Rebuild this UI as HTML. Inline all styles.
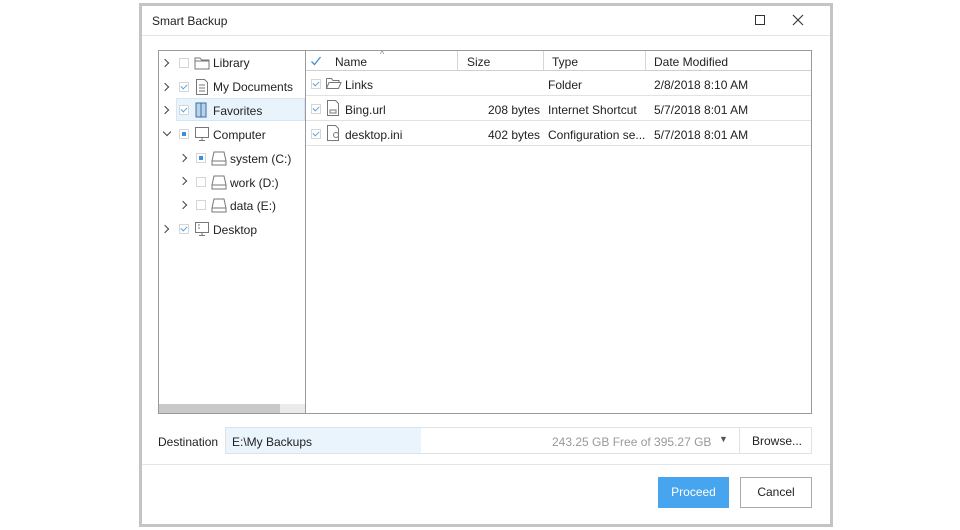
<!DOCTYPE html>
<html><head><style>
*{box-sizing:border-box;margin:0;padding:0}
body{width:960px;height:530px;background:#fff;font-family:"Liberation Sans",sans-serif;font-size:12px;color:#222;position:relative;overflow:hidden}
.a{position:absolute}
.dlg{left:139px;top:3px;width:694px;height:524px;border:3px solid #c4c4c4;background:#fff}
.t{white-space:nowrap}
.cb{position:absolute;width:10px;height:10px;border:1px solid #d6d6d6;background:#fff}
.cb.c::after{content:"";position:absolute;left:2px;top:0px;width:3px;height:5px;border:solid #5a9fd6;border-width:0 1px 1px 0;transform:rotate(45deg)}
.cb.s::after{content:"";position:absolute;left:2px;top:2px;width:4px;height:4px;background:#3d8fd8}
.chev{position:absolute;width:6px;height:6px;border:solid #444;border-width:1px 1px 0 0;transform:rotate(45deg)}
.chev.d{transform:rotate(135deg)}
.row{position:absolute;left:306px;width:505px;height:25px;border-bottom:1px solid #e2e2e2}
</style></head><body>
<div class="a dlg"></div>
<div class="a t" style="left:152px;top:14px;font-size:12px">Smart Backup</div>
<div class="a" style="left:755px;top:15px;width:10px;height:10px;border:1px solid #333"></div>
<svg class="a" style="left:792px;top:14px" width="12" height="12"><path d="M1 1L11 11M11 1L1 11" stroke="#333" stroke-width="1.1"/></svg>
<div class="a" style="left:142px;top:35px;width:688px;height:1px;background:#e4e4e4"></div>

<!-- panels -->
<div class="a" style="left:158px;top:50px;width:654px;height:364px;border:1px solid #9a9a9a"></div>
<div class="a" style="left:305px;top:50px;width:1px;height:364px;background:#9a9a9a"></div>
<div class="a" style="left:159px;top:404px;width:146px;height:9px;background:#ebebeb"></div>
<div class="a" style="left:159px;top:404px;width:121px;height:9px;background:#c9c9c9"></div>

<!-- tree -->
<div class="a" style="left:176px;top:98px;width:129px;height:23px;background:#e9f3fc;border:1px solid #d4e6f7"></div>
<div class="chev" style="left:162px;top:60px"></div><div class="cb" style="left:179px;top:58px"></div>
<svg class="a" style="left:194px;top:56px" width="16" height="14"><path d="M1 2h5l1.5 2H15v9H1z M1 5h14" fill="none" stroke="#777"/></svg>
<div class="a t" style="left:213px;top:56px">Library</div>
<div class="chev" style="left:162px;top:84px"></div><div class="cb c" style="left:179px;top:82px"></div>
<svg class="a" style="left:195px;top:79px" width="14" height="16"><path d="M1.5 .5h8l3 3v12h-11z M4 6h6M4 9h6M4 12h6" fill="none" stroke="#777"/></svg>
<div class="a t" style="left:213px;top:80px">My Documents</div>
<div class="chev" style="left:162px;top:107px"></div><div class="cb c" style="left:179px;top:105px"></div>
<svg class="a" style="left:195px;top:102px" width="14" height="16"><rect x="1" y="1" width="10" height="14" fill="#b9d2ea" stroke="#3a6ea5"/><path d="M6 1v14" stroke="#3a6ea5"/></svg>
<div class="a t" style="left:213px;top:104px">Favorites</div>
<div class="chev d" style="left:164px;top:129px"></div><div class="cb s" style="left:179px;top:129px"></div>
<svg class="a" style="left:194px;top:126px" width="16" height="16"><path d="M1.5 1.5h13v10h-13z M8 11.5v3M5 14.5h6" fill="none" stroke="#777"/></svg>
<div class="a t" style="left:213px;top:128px">Computer</div>
<div class="chev" style="left:180px;top:155px"></div><div class="cb s" style="left:196px;top:153px"></div>
<svg class="a" style="left:211px;top:150px" width="16" height="16"><path d="M3 2h10l2 9v4H1v-4z M1 11h14" fill="none" stroke="#777"/></svg>
<div class="a t" style="left:230px;top:152px">system (C:)</div>
<div class="chev" style="left:180px;top:178px"></div><div class="cb" style="left:196px;top:177px"></div>
<svg class="a" style="left:211px;top:174px" width="16" height="16"><path d="M3 2h10l2 9v4H1v-4z M1 11h14" fill="none" stroke="#777"/></svg>
<div class="a t" style="left:230px;top:176px">work (D:)</div>
<div class="chev" style="left:180px;top:202px"></div><div class="cb" style="left:196px;top:200px"></div>
<svg class="a" style="left:211px;top:197px" width="16" height="16"><path d="M3 2h10l2 9v4H1v-4z M1 11h14" fill="none" stroke="#777"/></svg>
<div class="a t" style="left:230px;top:199px">data (E:)</div>
<div class="chev" style="left:162px;top:226px"></div><div class="cb c" style="left:179px;top:224px"></div>
<svg class="a" style="left:194px;top:221px" width="16" height="16"><path d="M1.5 1.5h13v10h-13z M8 11.5v3M5 14.5h6 M4 4h2M4 7h2" fill="none" stroke="#777"/></svg>
<div class="a t" style="left:213px;top:223px">Desktop</div>

<!-- list header -->
<div class="a" style="left:306px;top:51px;width:505px;height:20px;border-bottom:1px solid #cfcfcf"></div>
<div class="a" style="left:457px;top:51px;width:1px;height:20px;background:#d6d6d6"></div>
<div class="a" style="left:543px;top:51px;width:1px;height:20px;background:#d6d6d6"></div>
<div class="a" style="left:645px;top:51px;width:1px;height:20px;background:#d6d6d6"></div>
<svg class="a" style="left:310px;top:55px" width="12" height="12"><path d="M1.5 6.5L4.5 9.5L10.5 2" fill="none" stroke="#3d8fd8" stroke-width="1.3"/></svg>
<div class="a t" style="left:335px;top:55px">Name</div>
<div class="a t" style="left:380px;top:49px;font-size:9px;color:#888">^</div>
<div class="a t" style="left:467px;top:55px">Size</div>
<div class="a t" style="left:552px;top:55px">Type</div>
<div class="a t" style="left:654px;top:55px">Date Modified</div>

<div class="row" style="top:71px"></div>
<div class="cb c" style="left:311px;top:79px"></div>
<svg class="a" style="left:326px;top:77px" width="16" height="13"><path d="M.5 1.5h5l1.5 2h6v2 M.5 1.5v10h12l2.5-6H3l-2.5 6" fill="none" stroke="#777"/></svg>
<div class="a t" style="left:345px;top:78px">Links</div>
<div class="a t" style="left:548px;top:78px">Folder</div>
<div class="a t" style="left:654px;top:78px">2/8/2018 8:10 AM</div>

<div class="row" style="top:96px"></div>
<div class="cb c" style="left:311px;top:104px"></div>
<svg class="a" style="left:327px;top:100px" width="13" height="16"><path d="M.5 .5h8l3 3v12H.5z M3 10h6v3H3z" fill="none" stroke="#777"/></svg>
<div class="a t" style="left:345px;top:103px">Bing.url</div>
<div class="a t" style="left:488px;top:103px">208 bytes</div>
<div class="a t" style="left:548px;top:103px">Internet Shortcut</div>
<div class="a t" style="left:654px;top:103px">5/7/2018 8:01 AM</div>

<div class="row" style="top:121px"></div>
<div class="cb c" style="left:311px;top:129px"></div>
<svg class="a" style="left:327px;top:125px" width="14" height="16"><path d="M.5 .5h8l3 3v12H.5z" fill="none" stroke="#777"/><circle cx="9" cy="10" r="2.5" fill="none" stroke="#777"/></svg>
<div class="a t" style="left:345px;top:128px">desktop.ini</div>
<div class="a t" style="left:488px;top:128px">402 bytes</div>
<div class="a t" style="left:548px;top:128px">Configuration se...</div>
<div class="a t" style="left:654px;top:128px">5/7/2018 8:01 AM</div>

<!-- destination -->
<div class="a t" style="left:158px;top:435px">Destination</div>
<div class="a" style="left:225px;top:427px;width:587px;height:27px;border:1px solid #e2e2e2"></div>
<div class="a" style="left:226px;top:428px;width:195px;height:25px;background:#eaf4fc"></div>
<div class="a t" style="left:232px;top:435px">E:\My Backups</div>
<div class="a t" style="left:552px;top:435px;color:#999">243.25 GB Free of 395.27 GB</div>
<div class="a t" style="left:719px;top:434px;font-size:9px;color:#555">▼</div>
<div class="a" style="left:739px;top:428px;width:1px;height:25px;background:#e2e2e2"></div>
<div class="a t" style="left:752px;top:434px">Browse...</div>
<div class="a" style="left:142px;top:464px;width:688px;height:1px;background:#e4e4e4"></div>

<div class="a" style="left:658px;top:477px;width:71px;height:31px;background:#46a5ee;color:#fff;text-align:center;line-height:31px">Proceed</div>
<div class="a" style="left:740px;top:477px;width:72px;height:31px;border:1px solid #aaa;text-align:center;line-height:29px">Cancel</div>
</body></html>
